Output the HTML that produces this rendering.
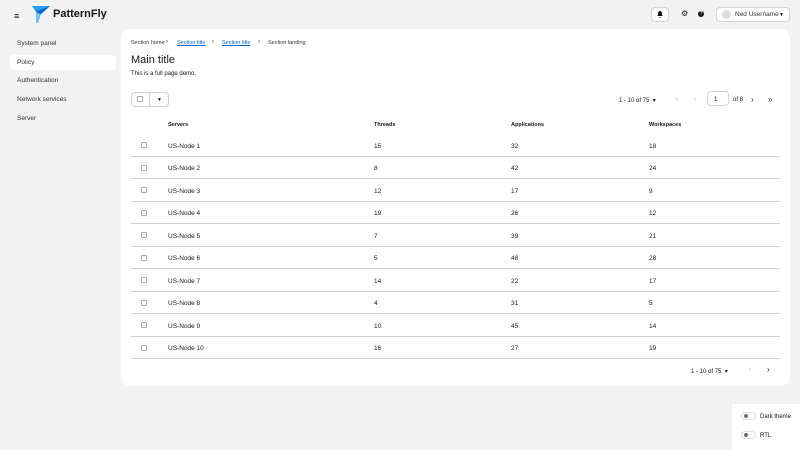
<!DOCTYPE html>
<html><head><meta charset="utf-8"><style>
*{box-sizing:border-box;margin:0;padding:0}
body{width:800px;height:450px;background:#f2f2f2;font-family:"Liberation Sans",sans-serif;color:#151515;position:relative;overflow:hidden;font-size:6.5px}
.a{position:absolute}
.nav{left:10px;width:106px;height:15px;line-height:15px;padding-left:7px;font-size:6.5px;color:#333;border-radius:4px}
.card{left:121px;top:29px;width:669px;height:357px;background:#fff;border-radius:10px}
.cb{width:6px;height:6px;border:1px solid #aaa;border-radius:1px;background:#fff}
.row{left:131px;width:649px;height:22.5px;border-bottom:1px solid #d2d2d2}
.row span{position:absolute;top:8.5px}
.lnk{color:#0066cc;text-decoration:underline}
.btn{background:#fff;border:1px solid #d2d2d2;border-radius:4px}
</style></head><body>
<div class="a" style="left:14px;top:11px;font-size:9px">≡</div>
<svg class="a" style="left:32px;top:6px" width="18" height="17" viewBox="0 0 18 17"><path d="M0 0H18L9 8L6 17H4V6Z" fill="#2b9af3"/><path d="M4 6L9 8L6 17H4Z" fill="#73bcf7"/><path d="M18 0L9 8L4 6Z" fill="#0066cc"/></svg>
<div class="a" style="left:53px;top:8px;font-size:11px;font-weight:bold">PatternFly</div>
<div class="a btn" style="left:651px;top:7px;width:18px;height:15px"></div>
<svg class="a" style="left:657px;top:11px" width="6" height="7" viewBox="0 0 6 7"><path d="M3 0C1 0 1 2 1 4L0 5H6L5 4C5 2 5 0 3 0ZM2 6H4L3 7Z" fill="#151515"/></svg>
<div class="a" style="left:681px;top:9px;font-size:8px">⚙</div>
<div class="a" style="left:698px;top:11px;width:6px;height:6px;border-radius:50%;background:#151515;color:#fff;font-size:5px;text-align:center;line-height:6px">?</div>
<div class="a btn" style="left:716px;top:7px;width:74px;height:15px"></div>
<div class="a" style="left:722px;top:10px;width:9px;height:9px;border-radius:50%;background:#ddd"></div>
<div class="a" style="left:735px;top:11px;color:#333">Ned Username</div>
<div class="a" style="left:779px;top:12px;font-size:5px">▼</div>
<div class="a nav" style="top:36px">System panel</div>
<div class="a nav" style="top:55px;background:#fff">Policy</div>
<div class="a nav" style="top:73px">Authentication</div>
<div class="a nav" style="top:92px">Network services</div>
<div class="a nav" style="top:111px">Server</div>
<div class="a card"></div>
<div class="a" style="left:131px;top:40px;font-size:5.5px;color:#333">Section home</div>
<div class="a" style="left:166px;top:39px;font-size:6px">›</div>
<div class="a lnk" style="left:177px;top:40px;font-size:5.5px">Section title</div>
<div class="a" style="left:212px;top:39px;font-size:6px">›</div>
<div class="a lnk" style="left:222px;top:40px;font-size:5.5px">Section title</div>
<div class="a" style="left:258px;top:39px;font-size:6px">›</div>
<div class="a" style="left:268px;top:40px;font-size:5.5px;color:#333">Section landing</div>
<div class="a" style="left:131px;top:54px;font-size:11px">Main title</div>
<div class="a" style="left:131px;top:71px;font-size:6px">This is a full page demo.</div>
<div class="a btn" style="left:131px;top:92px;width:38px;height:15px"></div>
<div class="a" style="left:149px;top:92px;width:1px;height:15px;background:#d2d2d2"></div>
<div class="a cb" style="left:137px;top:96px"></div>
<div class="a" style="left:157px;top:97px;font-size:5px">▼</div>
<div class="a" style="left:619px;top:97px;font-size:6px">1 - 10 of 75 &nbsp;▾</div>
<div class="a" style="left:675px;top:96px;color:#bbb">«</div>
<div class="a" style="left:694px;top:96px;color:#bbb">‹</div>
<div class="a btn" style="left:707px;top:91px;width:22px;height:15px;font-size:6px;padding:4.5px 0 0 6px">1</div>
<div class="a" style="left:733px;top:97px;font-size:6px">of 8</div>
<div class="a" style="left:751px;top:95px;font-size:8px">›</div>
<div class="a" style="left:768px;top:95px;font-size:8px">»</div>
<div class="a" style="left:168px;top:122px;font-size:5.5px;font-weight:bold">Servers</div>
<div class="a" style="left:374px;top:122px;font-size:5.5px;font-weight:bold">Threads</div>
<div class="a" style="left:511px;top:122px;font-size:5.5px;font-weight:bold">Applications</div>
<div class="a" style="left:649px;top:122px;font-size:5.5px;font-weight:bold">Workspaces</div>
<div id="t"></div>
<script>
var d=[[15,32,18],[8,42,24],[12,17,9],[19,26,12],[7,39,21],[5,48,28],[14,22,17],[4,31,5],[10,45,14],[16,27,19]],h='';
d.forEach(function(r,i){var y=134+22.5*i;h+='<div class="a row" style="top:'+y+'px"><div class="a cb" style="left:10px;top:8px"></div><span style="left:37px">US-Node '+(i+1)+'</span><span style="left:243px">'+r[0]+'</span><span style="left:380px">'+r[1]+'</span><span style="left:518px">'+r[2]+'</span></div>'});
document.getElementById('t').innerHTML=h;
</script>
<div class="a" style="left:691px;top:368px;font-size:6px">1 - 10 of 75 &nbsp;▾</div>
<div class="a" style="left:749px;top:366px;color:#bbb">‹</div>
<div class="a" style="left:767px;top:365px;font-size:8px">›</div>
<div class="a" style="left:732px;top:404px;width:68px;height:46px;background:#fff"></div>
<div class="a" style="left:741px;top:412px;width:15px;height:8px;border-radius:4px;border:1px solid #ddd"></div>
<div class="a" style="left:744px;top:414px;width:4px;height:4px;border-radius:50%;background:#6a6e73"></div>
<div class="a" style="left:760px;top:414px;font-size:6px">Dark theme</div>
<div class="a" style="left:741px;top:431px;width:15px;height:8px;border-radius:4px;border:1px solid #ddd"></div>
<div class="a" style="left:744px;top:433px;width:4px;height:4px;border-radius:50%;background:#6a6e73"></div>
<div class="a" style="left:760px;top:433px;font-size:6px">RTL</div>
</body></html>
